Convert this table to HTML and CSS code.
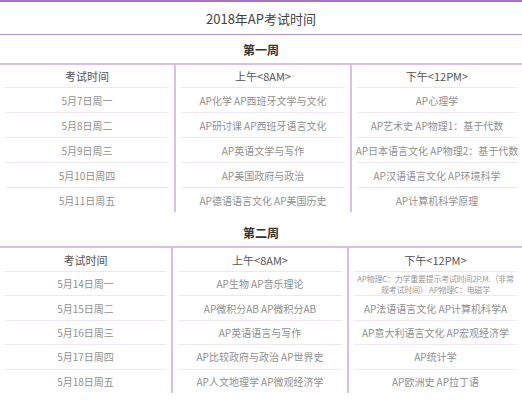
FILE: index.html
```html
<!DOCTYPE html>
<html lang="zh-CN">
<head>
<meta charset="utf-8">
<title>2018年AP考试时间</title>
<link rel="stylesheet" href="styles.css">
</head>
<body>
<div class="page">
  <div class="title">2018年AP考试时间</div>

  <div class="week-label">第一周</div>
  <div class="table t1">
    <div class="cell head"><div class="in">考试时间</div></div>
    <div class="cell head"><div class="in">上午&lt;8AM&gt;</div></div>
    <div class="cell head"><div class="in">下午&lt;12PM&gt;</div></div>

    <div class="cell"><div class="in">5月7日周一</div></div>
    <div class="cell"><div class="in">AP化学 AP西班牙文学与文化</div></div>
    <div class="cell"><div class="in">AP心理学</div></div>

    <div class="cell"><div class="in">5月8日周二</div></div>
    <div class="cell"><div class="in">AP研讨课 AP西班牙语言文化</div></div>
    <div class="cell"><div class="in">AP艺术史 AP物理1：基于代数</div></div>

    <div class="cell"><div class="in">5月9日周三</div></div>
    <div class="cell"><div class="in">AP英语文学与写作</div></div>
    <div class="cell"><div class="in">AP日本语言文化 AP物理2：基于代数</div></div>

    <div class="cell"><div class="in">5月10日周四</div></div>
    <div class="cell"><div class="in">AP美国政府与政治</div></div>
    <div class="cell"><div class="in">AP汉语语言文化 AP环境科学</div></div>

    <div class="cell last"><div class="in">5月11日周五</div></div>
    <div class="cell last"><div class="in">AP德语语言文化 AP美国历史</div></div>
    <div class="cell last"><div class="in">AP计算机科学原理</div></div>
  </div>

  <div class="week-label w2">第二周</div>
  <div class="table t2">
    <div class="cell head"><div class="in">考试时间</div></div>
    <div class="cell head"><div class="in">上午&lt;8AM&gt;</div></div>
    <div class="cell head"><div class="in">下午&lt;12PM&gt;</div></div>

    <div class="cell"><div class="in">5月14日周一</div></div>
    <div class="cell"><div class="in">AP生物 AP音乐理论</div></div>
    <div class="cell"><div class="in small">AP物理C：力学重要提示考试时间2P.M.（非常规考试时间） AP物理C：电磁学</div></div>

    <div class="cell"><div class="in">5月15日周二</div></div>
    <div class="cell"><div class="in">AP微积分AB AP微积分AB</div></div>
    <div class="cell"><div class="in">AP法语语言文化 AP计算机科学A</div></div>

    <div class="cell"><div class="in">5月16日周三</div></div>
    <div class="cell"><div class="in">AP英语语言与写作</div></div>
    <div class="cell"><div class="in">AP意大利语言文化 AP宏观经济学</div></div>

    <div class="cell"><div class="in">5月17日周四</div></div>
    <div class="cell"><div class="in">AP比较政府与政治 AP世界史</div></div>
    <div class="cell"><div class="in">AP统计学</div></div>

    <div class="cell last"><div class="in">5月18日周五</div></div>
    <div class="cell last"><div class="in">AP人文地理学 AP微观经济学</div></div>
    <div class="cell last"><div class="in">AP欧洲史 AP拉丁语</div></div>
  </div>
</div>
</body>
</html>
```

FILE: styles.css
```css
html, body {
  margin: 0;
  padding: 0;
  background: #ffffff;
}

body {
  font-family: "Noto Sans CJK SC", "Noto Sans", sans-serif;
  color: #444;
}

.page {
  width: 522px;
  border-top: 2px solid #a874b8;
}

.title {
  height: 32px;
  display: flex;
  align-items: center;
  justify-content: center;
  font-size: 13px;
  color: #444;
  border-bottom: 1px solid #b793c3;
}

.week-label {
  height: 28px;
  display: flex;
  align-items: center;
  justify-content: center;
  font-size: 12px;
  font-weight: bold;
  color: #333;
  border-bottom: 2px solid #dcbde5;
}

.week-label.w2 {
  margin-top: 6px;
}

.table {
  display: grid;
}

.t1 {
  grid-template-columns: 174px 176px 172px;
}

.t2 {
  grid-template-columns: 171px 176px 175px;
}

.cell {
  padding: 0 5px;
}

.cell:nth-child(3n+2),
.cell:nth-child(3n) {
  border-left: 2px solid #dcbde5;
}

.in {
  height: 24px;
  border-bottom: 1px solid #f1e7f4;
  display: flex;
  align-items: center;
  justify-content: center;
  text-align: center;
  font-size: 10px;
  color: #909090;
  white-space: nowrap;
}

.head .in {
  height: 22px;
  font-size: 11px;
  color: #555;
}

.t2 .head .in {
  height: 23px;
}

.t2 .in {
  height: 23.4px;
}

.last .in {
  border-bottom: none;
}

.in.small {
  font-size: 8px;
  line-height: 11px;
  white-space: normal;
  padding: 0 2px;
  letter-spacing: -0.25px;
  color: #999;
}
```
